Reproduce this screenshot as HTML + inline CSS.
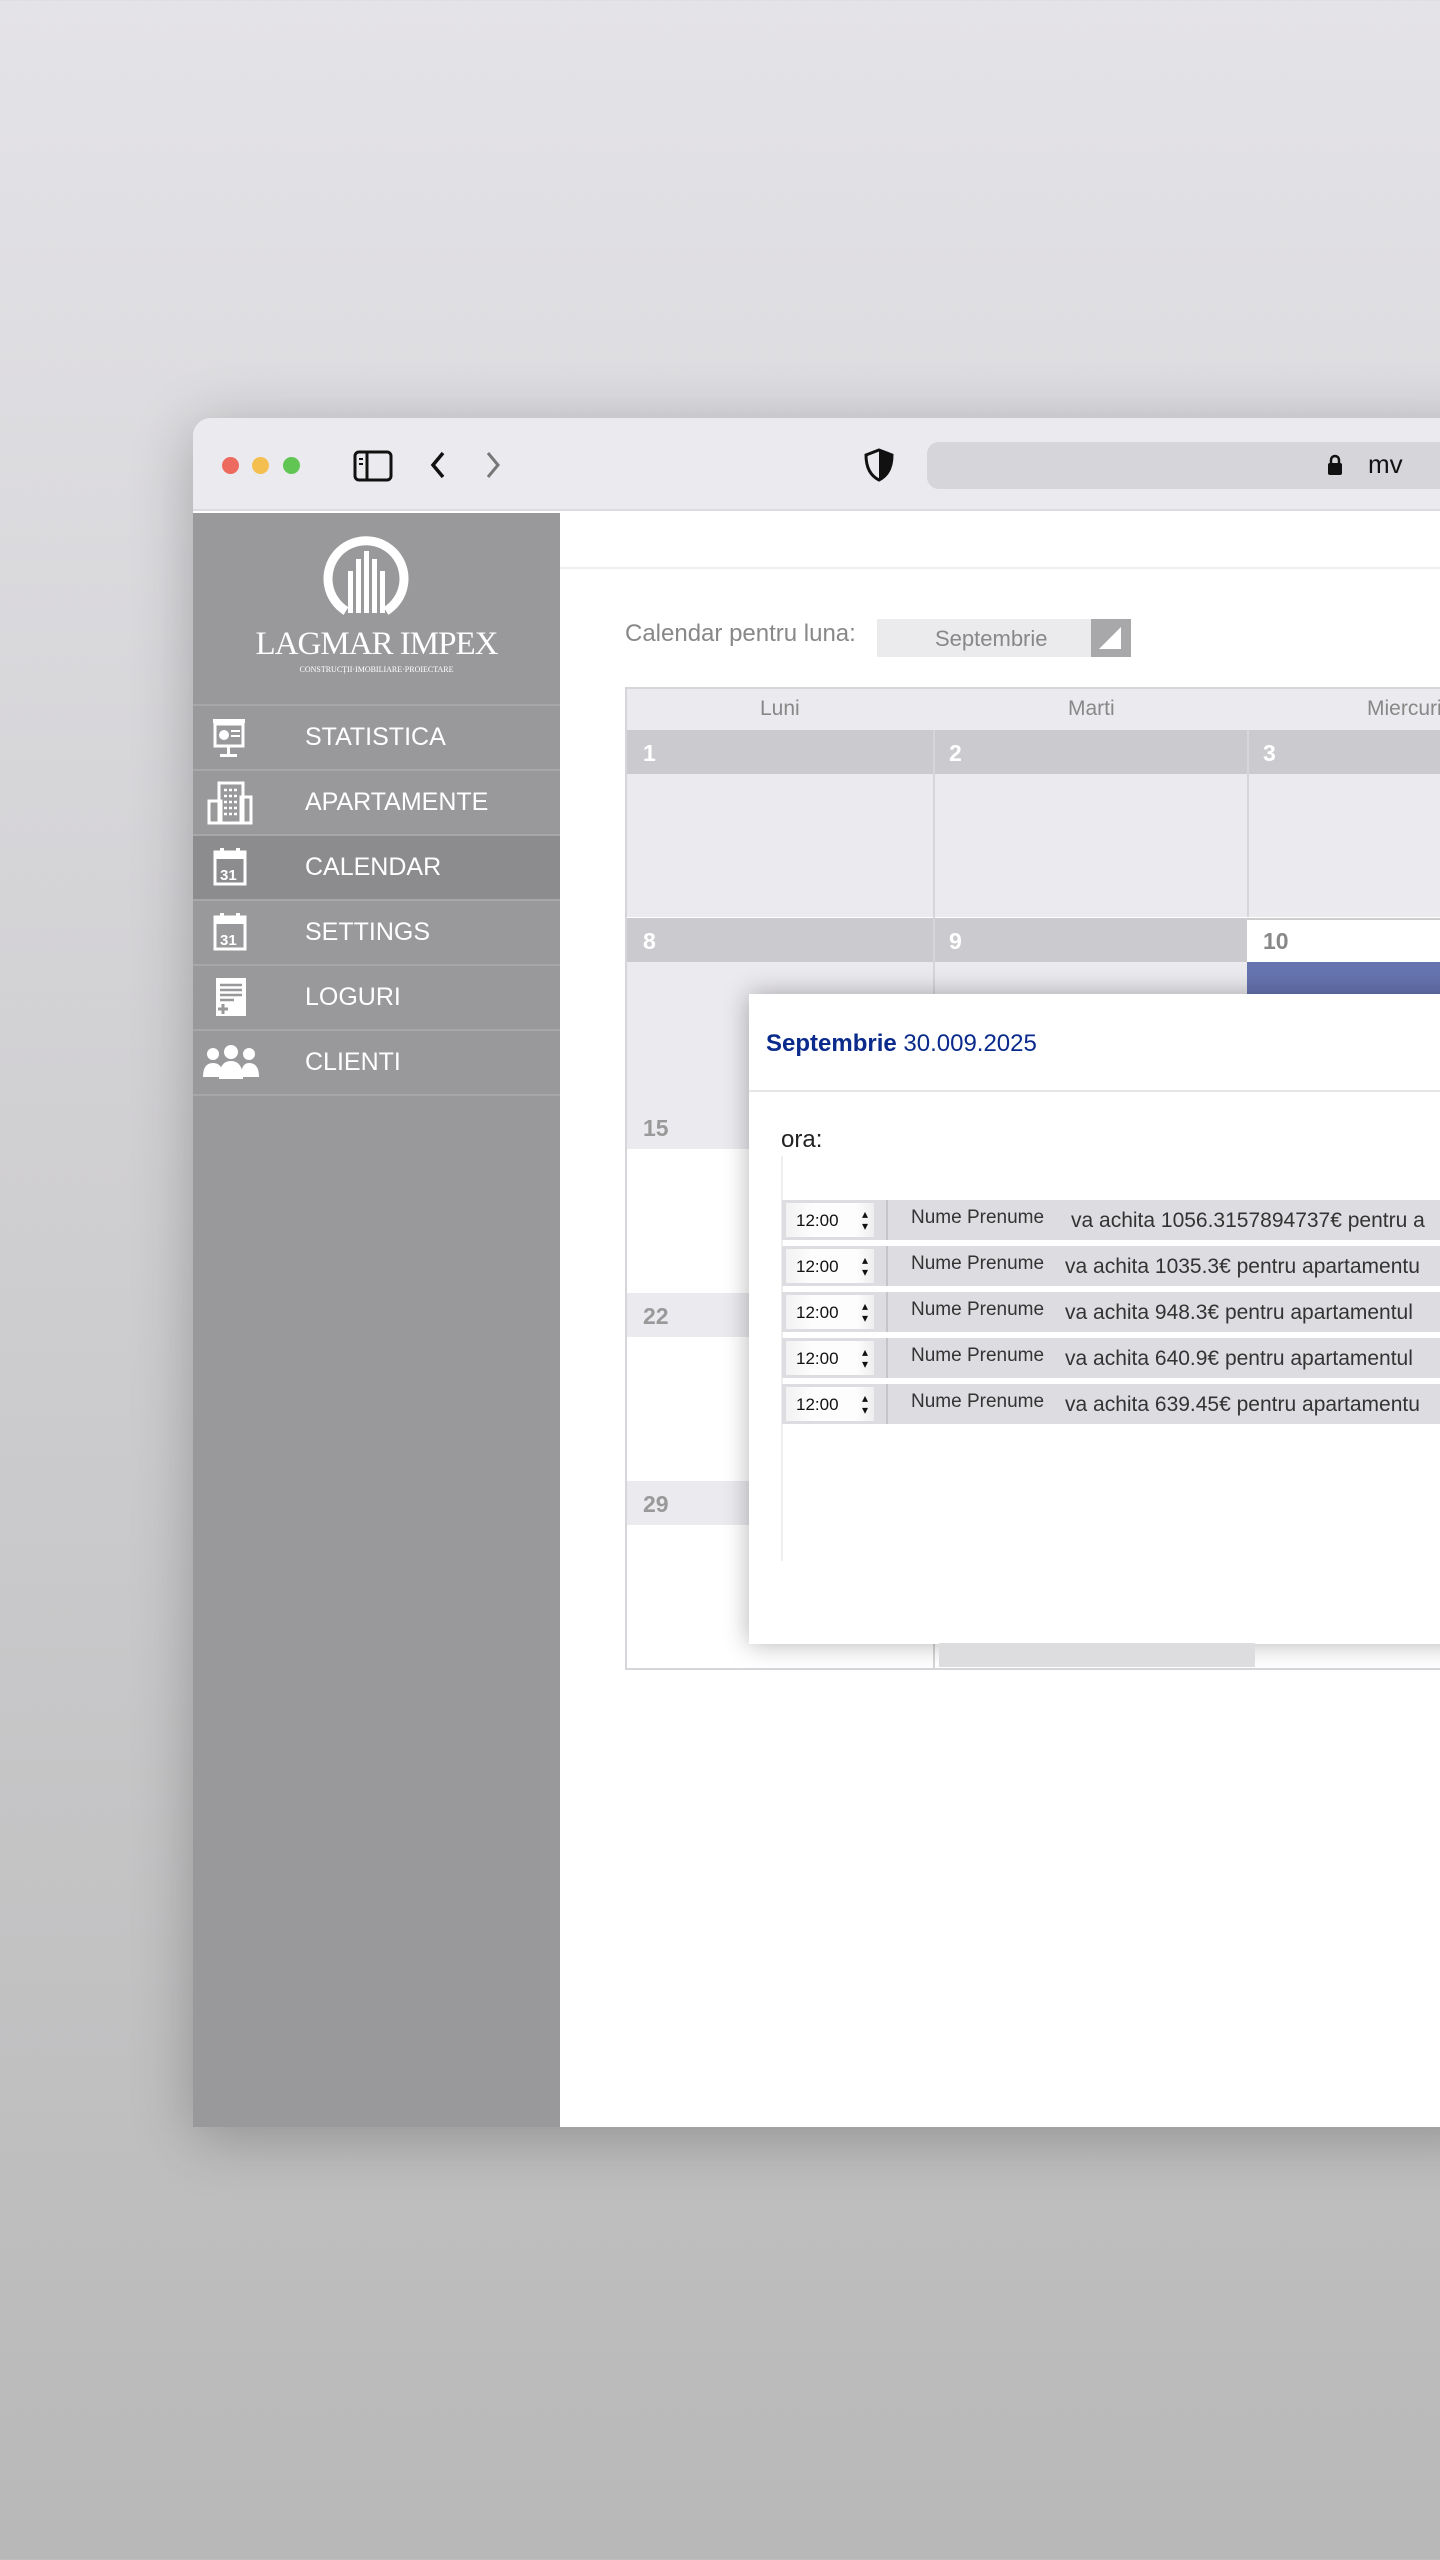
<!DOCTYPE html>
<html><head><meta charset="utf-8"><style>
*{margin:0;padding:0;box-sizing:border-box}
body{width:1440px;height:2560px;overflow:hidden;position:relative;background:linear-gradient(#e4e3e7 0%,#d2d1d4 40%,#b8b8b8 100%);font-family:"Liberation Sans",sans-serif}
.win{position:absolute;left:193px;top:418px;width:1300px;height:1709px;background:#fff;border-radius:18px 0 0 0;overflow:hidden;box-shadow:0 10px 60px rgba(0,0,0,.25)}
.tb{position:absolute;left:0;top:0;right:0;height:93px;background:#ebeaee;border-bottom:2px solid #dcdbe0}
.dot{position:absolute;top:39px;width:17px;height:17px;border-radius:50%}
.url{position:absolute;left:734px;top:24px;width:700px;height:47px;background:#d6d5da;border-radius:12px}
.side{position:absolute;left:0;top:95px;width:367px;bottom:0;background:#99989b}
.mi{position:absolute;left:0;width:367px;height:65px;border-top:2px solid #a7a6a9;color:#fff;font-size:25px;line-height:63px;padding-left:112px}
.mi.act{background:#8c8b8e}
.mi svg{position:absolute;left:14px;top:10px}
.main{position:absolute;left:367px;top:95px;right:0;bottom:0;background:#fff}
.a{position:absolute}
.row{position:absolute;left:782px;width:700px;height:40px;background:#dddce0}
.sel{position:absolute;left:4px;top:3px;width:88px;height:34px;background:linear-gradient(90deg,#f2f2f3,#fdfdfd 30%,#fdfdfd 80%,#eee);font-size:17px;line-height:36px;padding-left:10px;color:#111}
.sel:after{content:"▴\A▾";white-space:pre;position:absolute;right:6px;top:5px;font-size:12px;line-height:12px}
.nm{position:absolute;left:129px;top:7px;font-size:19px;color:#333}
.tx{position:absolute;left:283px;top:9px;font-size:21px;color:#333;white-space:nowrap}
</style></head><body>
<div class="win">
 <div class="tb">
  <div class="dot" style="left:29px;background:#ec6a5e"></div>
  <div class="dot" style="left:59px;background:#f4bf4f"></div>
  <div class="dot" style="left:90px;background:#61c554"></div>
  <svg class="a" style="left:160px;top:32px" width="40" height="32" viewBox="0 0 40 32"><rect x="2" y="2" width="36" height="28" rx="4" fill="none" stroke="#111" stroke-width="3"/><line x1="14" y1="2" x2="14" y2="30" stroke="#111" stroke-width="3"/><line x1="6" y1="9" x2="10" y2="9" stroke="#111" stroke-width="2"/><line x1="6" y1="14" x2="10" y2="14" stroke="#111" stroke-width="2"/></svg>
  <svg class="a" style="left:235px;top:32px" width="20" height="30"><path d="M15 3 L5 15 L15 27" fill="none" stroke="#111" stroke-width="3.5"/></svg>
  <svg class="a" style="left:290px;top:32px" width="20" height="30"><path d="M5 3 L15 15 L5 27" fill="none" stroke="#777" stroke-width="3"/></svg>
  <svg class="a" style="left:670px;top:30px" width="32" height="34" viewBox="0 0 32 34"><path d="M16 2 L29 7 C29 20 24 28 16 32 C8 28 3 20 3 7 Z" fill="none" stroke="#111" stroke-width="3"/><path d="M16 2 L29 7 C29 20 24 28 16 32 Z" fill="#111"/></svg>
  <div class="url"><svg class="a" style="left:400px;top:12px" width="16" height="22"><rect x="1" y="9" width="14" height="12" rx="2" fill="#111"/><path d="M4 10 V6 a4 4 0 0 1 8 0 V10" fill="none" stroke="#111" stroke-width="2.5"/></svg><div class="a" style="left:441px;top:7px;font-size:26px;color:#111">mv</div></div>
 </div>
 <div class="side">
  <svg class="a" style="left:129px;top:18px" width="88" height="90" viewBox="0 0 88 90"><path d="M24 80 A38 38 0 1 1 64 80" fill="none" stroke="#fff" stroke-width="9"/><g fill="#fff"><rect x="26" y="40" width="5" height="42"/><rect x="34" y="28" width="5" height="54"/><rect x="42" y="20" width="5" height="62"/><rect x="50" y="28" width="5" height="54"/><rect x="58" y="40" width="5" height="42"/></g></svg>
  <div class="a" style="left:0;width:367px;top:113px;text-align:center;color:#fff;font-family:'Liberation Serif',serif;font-size:33px;letter-spacing:-1px">LAGMAR IMPEX</div>
  <div class="a" style="left:0;width:367px;top:152px;text-align:center;color:#fff;font-family:'Liberation Serif',serif;font-size:8px">CONSTRUCȚII·IMOBILIARE·PROIECTARE</div>
  <div class="mi" style="top:191px"><svg width="44" height="44"><rect x="6" y="3" width="32" height="4" fill="#fff"/><rect x="8" y="8" width="28" height="22" fill="none" stroke="#fff" stroke-width="3"/><circle cx="17" cy="19" r="5" fill="#fff"/><rect x="24" y="14" width="9" height="2" fill="#fff"/><rect x="24" y="19" width="9" height="2" fill="#fff"/><rect x="20" y="30" width="3" height="10" fill="#fff"/><rect x="13" y="38" width="17" height="3" fill="#fff"/></svg>STATISTICA</div>
  <div class="mi" style="top:256px"><svg width="46" height="46"><rect x="12" y="2" width="24" height="40" fill="none" stroke="#fff" stroke-width="3"/><rect x="2" y="20" width="12" height="22" fill="none" stroke="#fff" stroke-width="3"/><rect x="34" y="16" width="10" height="26" fill="none" stroke="#fff" stroke-width="3"/><path d="M17 9h14M17 15h14M17 21h14M17 27h14M17 33h14" stroke="#fff" stroke-width="2.5" stroke-dasharray="3 2"/></svg>APARTAMENTE</div>
  <div class="mi act" style="top:321px"><svg width="44" height="44"><rect x="8" y="6" width="30" height="32" fill="none" stroke="#fff" stroke-width="3"/><rect x="8" y="6" width="30" height="7" fill="#fff"/><rect x="13" y="2" width="4" height="8" fill="#fff"/><rect x="29" y="2" width="4" height="8" fill="#fff"/><text x="13" y="34" font-size="15" font-family="Liberation Sans" font-weight="bold" fill="#fff">31</text></svg>CALENDAR</div>
  <div class="mi" style="top:386px"><svg width="44" height="44"><rect x="8" y="6" width="30" height="32" fill="none" stroke="#fff" stroke-width="3"/><rect x="8" y="6" width="30" height="7" fill="#fff"/><rect x="13" y="2" width="4" height="8" fill="#fff"/><rect x="29" y="2" width="4" height="8" fill="#fff"/><text x="13" y="34" font-size="15" font-family="Liberation Sans" font-weight="bold" fill="#fff">31</text></svg>SETTINGS</div>
  <div class="mi" style="top:451px"><svg width="44" height="44"><rect x="9" y="2" width="30" height="38" fill="#fff"/><path d="M13 9h22M13 14h22M13 19h22M13 24h14" stroke="#99989b" stroke-width="2.5"/><path d="M16 28v10M11 33h10" stroke="#99989b" stroke-width="3"/></svg>LOGURI</div>
  <div class="mi" style="top:516px"><svg width="62" height="44" style="left:8px"><g fill="#fff"><circle cx="12" cy="13" r="6"/><circle cx="30" cy="11" r="7"/><circle cx="48" cy="13" r="6"/><path d="M2 36 q0-14 10-14 q10 0 10 14z"/><path d="M40 36 q0-14 8-14 q10 0 10 14z"/><path d="M18 38 q0-18 12-18 q12 0 12 18z"/></g></svg>CLIENTI</div>
  <div class="a" style="left:0;top:581px;width:367px;border-top:2px solid #a7a6a9"></div>
 </div>
 <div class="main">
  <div class="a" style="left:0;right:0;top:54px;border-top:2px solid #eeedf0"></div>
  <div class="a" style="left:65px;top:107px;font-size:24px;color:#888">Calendar pentru luna:</div>
  <div class="a" style="left:317px;top:106px;width:254px;height:38px;background:#ebeaed"><span class="a" style="left:58px;top:7px;font-size:22px;color:#888">Septembrie</span><div class="a" style="right:0;top:0;width:40px;height:38px;background:#a8a7aa"></div><svg class="a" style="right:8px;top:6px" width="26" height="26"><path d="M24 2 L24 24 L2 24 Z" fill="#fff"/></svg></div>
  <div class="a" style="left:65px;top:174px;width:1100px;height:983px;border:2px solid #d6d5d9;background:#fff">
   <div class="a" style="left:0;top:0;right:0;height:41px;background:#ebeaee;font-size:21px;color:#888"><span class="a" style="left:133px;top:8px">Luni</span><span class="a" style="left:441px;top:8px">Marti</span><span class="a" style="left:740px;top:8px">Miercuri</span></div>
   <div class="a" style="left:0;top:41px;right:0;height:187px;background:#ebeaee"></div>
   <div class="a" style="left:0;top:41px;right:0;height:44px;background:#cbcace"></div>
   <div class="a" style="left:0;top:273px;width:620px;height:143px;background:#ebeaee"></div>
   <div class="a" style="left:0;top:229px;width:620px;height:44px;background:#cbcace"></div>
   <div class="a" style="left:620px;top:229px;right:0;height:44px;background:#fff;border-top:2px solid #ccc"></div>
   <div class="a" style="left:620px;top:273px;right:0;height:34px;background:#6674b0"></div>
   <div class="a" style="left:0;top:416px;right:0;height:44px;background:#ebeaee"></div>
   <div class="a" style="left:0;top:604px;right:0;height:44px;background:#ebeaee"></div>
   <div class="a" style="left:0;top:792px;right:0;height:44px;background:#ebeaee"></div>
   <div class="a" style="left:306px;top:41px;bottom:0;border-left:2px solid #d6d5d9"></div>
   <div class="a" style="left:620px;top:41px;height:187px;border-left:2px solid #d6d5d9"></div>
   <div style="font-size:23px;font-weight:bold;color:#fff">
    <span class="a" style="left:16px;top:51px">1</span><span class="a" style="left:322px;top:51px">2</span><span class="a" style="left:636px;top:51px">3</span>
    <span class="a" style="left:16px;top:239px">8</span><span class="a" style="left:322px;top:239px">9</span><span class="a" style="left:636px;top:239px;color:#888">10</span>
    <span class="a" style="left:16px;top:426px;color:#999">15</span><span class="a" style="left:16px;top:614px;color:#999">22</span><span class="a" style="left:16px;top:802px;color:#999">29</span>
   </div>
  </div>
 </div>
 <div class="a" style="left:556px;top:576px;width:800px;height:650px;background:#fff;box-shadow:0 0 24px rgba(0,0,0,.3)">
  <div class="a" style="left:17px;top:36px;font-size:24px;color:#0a2a8c"><b>Septembrie</b> 30.009.2025</div>
  <div class="a" style="left:0;right:0;top:96px;border-top:2px solid #e6e5e8"></div>
  <div class="a" style="left:32px;top:132px;font-size:24px;color:#222">ora:</div>
  <div class="a" style="left:32px;top:162px;height:405px;border-left:2px solid #eee"></div>
 </div>
 <div class="a" style="left:746px;top:1225px;width:316px;height:24px;background:#dddcdf"></div>
</div>
<div class="row" style="top:1200px"><div class="sel">12:00</div><div class="a" style="left:104px;top:0;height:40px;border-left:2px solid #c5c4c8"></div><span class="nm">Nume Prenume</span><span class="tx" style="left:289px">va achita 1056.3157894737€ pentru a</span></div>
<div class="row" style="top:1246px"><div class="sel">12:00</div><div class="a" style="left:104px;top:0;height:40px;border-left:2px solid #c5c4c8"></div><span class="nm">Nume Prenume</span><span class="tx">va achita 1035.3€ pentru apartamentu</span></div>
<div class="row" style="top:1292px"><div class="sel">12:00</div><div class="a" style="left:104px;top:0;height:40px;border-left:2px solid #c5c4c8"></div><span class="nm">Nume Prenume</span><span class="tx">va achita 948.3€ pentru apartamentul</span></div>
<div class="row" style="top:1338px"><div class="sel">12:00</div><div class="a" style="left:104px;top:0;height:40px;border-left:2px solid #c5c4c8"></div><span class="nm">Nume Prenume</span><span class="tx">va achita 640.9€ pentru apartamentul</span></div>
<div class="row" style="top:1384px"><div class="sel">12:00</div><div class="a" style="left:104px;top:0;height:40px;border-left:2px solid #c5c4c8"></div><span class="nm">Nume Prenume</span><span class="tx">va achita 639.45€ pentru apartamentu</span></div>
</body></html>
